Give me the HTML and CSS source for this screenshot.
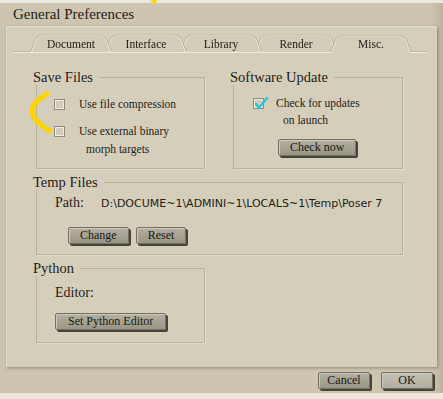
FILE: index.html
```html
<!DOCTYPE html>
<html lang="en">
<head>
    <meta charset="UTF-8">
    <title>General Preferences</title>
    <link rel="stylesheet" href="styles.css">
</head>
<body>
    <div class="topstrip"><span class="dot"></span></div>
    <div class="dialog">
        <div class="title">General Preferences</div>
        <div class="panel">
            <div class="tabs">
                <div class="tab t1">Document</div>
                <div class="tab t2">Interface</div>
                <div class="tab t3">Library</div>
                <div class="tab t4">Render</div>
                <div class="tab active">Misc.</div>
            </div>
            <div class="content">
                <div class="row">
                    <fieldset class="group save">
                        <legend>Save Files</legend>
                        <div class="inner">
                            <div class="opt first">
                                <span class="check"></span>
                                <span class="optlabel">Use file compression</span>
                            </div>
                            <div class="opt">
                                <span class="check"></span>
                                <span class="optlabel">Use external binary<br>morph targets</span>
                            </div>
                        </div>
                    </fieldset>
                    <fieldset class="group update">
                        <legend>Software Update</legend>
                        <div class="inner">
                            <div class="opt first">
                                <span class="check checked">
                                    <svg width="16" height="16" viewBox="0 0 16 16"><path d="M3 8 L6 12 L14 2" fill="none" stroke="#1fc6e0" stroke-width="2.2" stroke-linecap="round" stroke-linejoin="round"/></svg>
                                </span>
                                <span class="optlabel">Check for updates<br>on launch</span>
                            </div>
                            <div class="btnrow checkrow"><button class="btn">Check now</button></div>
                        </div>
                    </fieldset>
                </div>
                <fieldset class="group temp">
                    <legend>Temp Files</legend>
                    <div class="inner">
                        <div class="pathrow">
                            <span class="fieldname">Path:</span>
                            <span class="pathvalue">D:\DOCUME~1\ADMINI~1\LOCALS~1\Temp\Poser 7</span>
                        </div>
                        <div class="btnrow temprow">
                            <button class="btn">Change</button>
                            <button class="btn">Reset</button>
                        </div>
                    </div>
                </fieldset>
                <fieldset class="group python">
                    <legend>Python</legend>
                    <div class="inner">
                        <div class="editorrow"><span class="fieldname">Editor:</span></div>
                        <div class="btnrow pyrow"><button class="btn">Set Python Editor</button></div>
                    </div>
                </fieldset>
            </div>
        </div>
        <div class="footer">
            <button class="btn footbtn">Cancel</button>
            <button class="btn footbtn ok">OK</button>
        </div>
    </div>
    <div class="bottomstrip"></div>
    <svg class="mark" width="60" height="140" viewBox="0 0 60 140">
        <path d="M47 94 Q16 111 50 131" fill="none" stroke="#ffd400" stroke-width="5" stroke-linecap="round"/>
    </svg>
</body>
</html>
```
FILE: styles.css
```css
* {
    box-sizing: border-box;
}

body {
    margin: 0;
    width: 443px;
    height: 399px;
    overflow: hidden;
    position: relative;
    background-color: #cbc3ae;
    font-family: "Liberation Serif", Tinos, "Times New Roman", "DejaVu Serif", serif;
    color: #1f1d19;
}

.topstrip {
    display: flex;
    height: 3px;
    background-color: #ece8df;
}

.topstrip .dot {
    margin-left: 151px;
    width: 6px;
    height: 3px;
    background-color: #ffd400;
    border-radius: 0 0 3px 3px;
}

.dialog {
    display: flex;
    flex-direction: column;
    height: 390px;
    background: linear-gradient(90deg, #cdc5b0 0%, #cdc5b0 97%, #bdb5a0 100%);
}

.title {
    height: 23px;
    padding-left: 13px;
    font-size: 15px;
    line-height: 22px;
}

.panel {
    width: 431px;
    height: 341px;
    margin: 0 6px;
    padding-top: 10px;
    background-color: #d5cebb;
    box-shadow: inset 1px 1px 0 #e2dccc, 1px 1px 3px rgba(60, 50, 30, 0.4);
}

/* tabs */
.tabs {
    display: flex;
    height: 17px;
    margin: 0 9px 0 6px;
    padding-left: 19px;
    border-bottom: 1px solid #efeadf;
    box-shadow: 0 -1px 0 #c2baa6 inset;
}

.tab {
    position: relative;
    width: 80px;
    height: 16px;
    margin-right: -5px;
    text-align: center;
    font-size: 11.5px;
    line-height: 16px;
}

.tab::before {
    content: "";
    position: absolute;
    left: 0;
    right: 0;
    bottom: 0;
    height: 20px;
    z-index: -1;
    border: 1px solid #f0ebe1;
    border-bottom: none;
    border-radius: 6px 6px 0 0;
    background-color: #d3ccb9;
    box-shadow: -1px -1px 0 #b4ac98, 1px -1px 0 #b4ac98;
    transform: perspective(40px) rotateX(20.7deg);
    transform-origin: bottom;
}

.t1 { z-index: 5; }
.t2 { z-index: 4; }
.t3 { z-index: 3; }
.t4 { z-index: 2; }

.tab.active {
    z-index: 6;
}

.tab.active::before {
    bottom: -1px;
    background-color: #d5cebb;
}

/* groups */
.content {
    display: flex;
    flex-direction: column;
    gap: 5px;
    padding: 16px 0 0 30px;
}

.row {
    display: flex;
    gap: 28px;
    height: 100px;
}

.group {
    margin: 0;
    padding: 0;
    border: 1px solid #bab29e;
    box-shadow: 1px 1px 0 #e0dacb;
}

.group legend {
    margin-left: -4px;
    padding: 0 6px 0 0;
    font-size: 14.5px;
    line-height: 16px;
}

.save {
    width: 169px;
}

.save .inner {
    padding-left: 17px;
}

.update {
    width: 170px;
}

.update .inner {
    padding-left: 19px;
}

.temp {
    width: 367px;
    height: 81px;
}

.python {
    width: 169px;
    height: 83px;
}

.temp .inner,
.python .inner {
    padding-left: 18px;
}

.opt {
    display: flex;
    align-items: flex-start;
    margin-top: 9px;
    font-size: 11.5px;
    line-height: 18px;
}

.opt.first {
    margin-top: 10px;
}

.check {
    position: relative;
    flex: none;
    width: 11px;
    height: 11px;
    margin-top: 4px;
    margin-right: 14px;
    border: 1px solid #8e8a7e;
    background-color: #d2cbb9;
    box-shadow: inset 0 0 0 1px #f0ece3;
}

.check.checked {
    margin-top: 3px;
    margin-right: 12px;
}

.check svg {
    position: absolute;
    left: -1px;
    top: -3px;
}

.optlabel {
    padding-left: 7px;
    text-indent: -7px;
}

.update .opt {
    line-height: 17px;
}

/* buttons */
.btnrow {
    display: flex;
    gap: 7px;
}

.checkrow {
    margin-top: 10px;
    padding-left: 25px;
}

.btn {
    height: 17px;
    padding: 0 11px;
    border: 1px solid #747064;
    border-radius: 2px;
    background: linear-gradient(#b3b0a1, #999686);
    box-shadow: inset 1px 1px 0 #cdcabd, 2px 2px 0 #46433a;
    font-family: "Liberation Serif", Tinos, "Times New Roman", "DejaVu Serif", serif;
    font-size: 12px;
    line-height: 15px;
    color: #1a1915;
}

.pathrow {
    display: flex;
    align-items: center;
    height: 16px;
    margin-top: 5px;
}

.fieldname {
    font-size: 14px;
}

.pathrow .fieldname {
    width: 46px;
}

.pathvalue {
    font-family: "DejaVu Sans", Verdana, sans-serif;
    font-size: 11px;
}

.temprow {
    margin-top: 16px;
    padding-left: 13px;
}

.editorrow {
    height: 18px;
    line-height: 18px;
    margin-top: 7px;
}

.pyrow {
    margin-top: 12px;
}

.pyrow .btn {
    padding: 0 12px;
}

/* footer */
.footer {
    display: flex;
    justify-content: flex-end;
    gap: 11px;
    height: 26px;
    padding: 5px 10px 0 0;
}

.footbtn {
    width: 52px;
    padding: 0;
}

.footbtn.ok {
    background: linear-gradient(#c6c3b5, #b0ad9e);
}

.bottomstrip {
    height: 6px;
    background-color: #ebe7df;
}

.mark {
    position: absolute;
    left: 0;
    top: 0;
}
```
